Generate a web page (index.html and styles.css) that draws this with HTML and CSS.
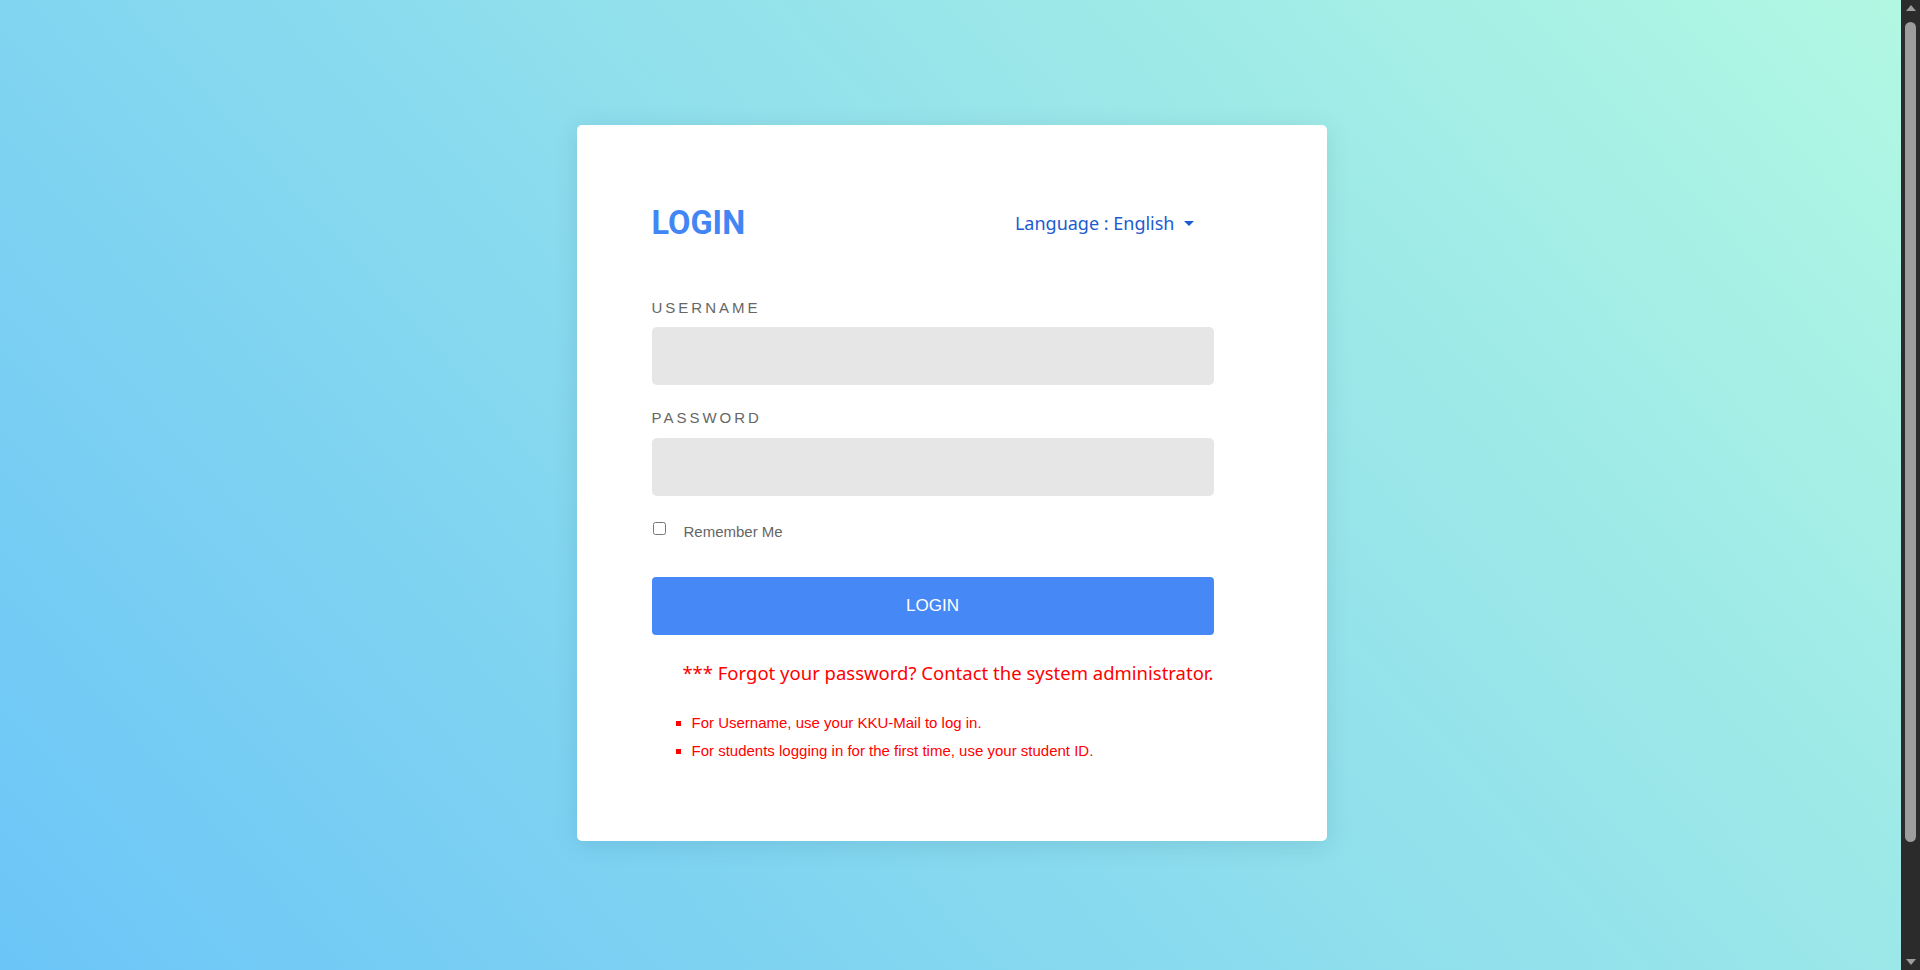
FILE: index.html
```html
<!DOCTYPE html>
<html lang="en">
<head>
<meta charset="utf-8">
<title>Login</title>
<link rel="stylesheet" href="styles.css">
</head>
<body>
<div class="page">
  <div class="card">
    <div class="card-head">
      <h1 class="title">LOGIN</h1>
      <div class="lang">Language : English<span class="caret"></span></div>
    </div>
    <form class="form">
      <label class="field-label" for="u">USERNAME</label>
      <input class="field" id="u" type="text">
      <label class="field-label second" for="p">PASSWORD</label>
      <input class="field" id="p" type="password">
      <div class="remember">
        <input class="check" type="checkbox" id="r">
        <label class="remember-text" for="r">Remember Me</label>
      </div>
      <button class="btn" type="button">LOGIN</button>
      <p class="forgot">*** Forgot your password? Contact the system administrator.</p>
      <ul class="notes">
        <li>For Username, use your KKU-Mail to log in.</li>
        <li>For students logging in for the first time, use your student ID.</li>
      </ul>
    </form>
  </div>
</div>
<div class="scrollbar" aria-hidden="true">
  <span class="sb-arrow sb-up"></span>
  <span class="sb-thumb"></span>
  <span class="sb-arrow sb-down"></span>
</div>
</body>
</html>
```
FILE: styles.css
```css
html {
  height: 100%;
}
body {
  margin: 0;
  min-height: 100%;
  font-family: "Liberation Sans", Arial, sans-serif;
  background: linear-gradient(48deg, #6bc5f7 0%, #b2f8e2 100%);
  overflow: hidden;
}
.page {
  display: flex;
  justify-content: center;
  padding: 125px 17px 0 0;
}
.card {
  width: 562px;
  padding: 75px 113px 76px 75px;
  background: #fff;
  border-radius: 5px;
  box-shadow: 0 4px 24px rgba(0, 60, 90, 0.12);
}
.card-head {
  display: flex;
  justify-content: space-between;
  align-items: center;
  height: 46px;
}
.title {
  margin: 0;
  font-family: Roboto, "Liberation Sans", sans-serif;
  font-weight: 700;
  font-size: 32.5px;
  line-height: 46px;
  color: #4285f4;
}
.lang {
  margin-right: 20px;
  font-family: "Noto Sans", sans-serif;
  font-size: 18px;
  color: #1c5cd0;
  display: flex;
  align-items: center;
}
.caret {
  display: inline-block;
  width: 0;
  height: 0;
  margin-left: 9px;
  margin-top: 1px;
  border-top: 5px solid #1c5cd0;
  border-left: 5px solid transparent;
  border-right: 5px solid transparent;
}
.form {
  display: flex;
  flex-direction: column;
  margin-top: 52.5px;
}
.field-label {
  font-size: 15px;
  line-height: 17px;
  letter-spacing: 3px;
  color: #666;
  margin-bottom: 11.5px;
}
.field-label.second {
  margin-top: 24px;
}
.field {
  box-sizing: border-box;
  height: 58px;
  width: 562px;
  border: none;
  border-radius: 5px;
  background: #e6e6e6;
  padding: 0 15px;
  font-size: 16px;
  outline: none;
}
.remember {
  display: flex;
  align-items: flex-start;
  margin-top: 26px;
}
.check {
  width: 13px;
  height: 13px;
  margin: 0 0 0 1px;
}
.remember-text {
  margin-left: 18px;
  margin-top: 1px;
  font-size: 15px;
  line-height: 17px;
  color: #666;
}
.btn {
  margin-top: 37px;
  height: 58px;
  width: 562px;
  border: none;
  border-radius: 4px;
  background: #4688f5;
  color: #fff;
  font-family: "Liberation Sans", Arial, sans-serif;
  font-size: 17px;
}
.forgot {
  margin: 25px 0 0;
  text-align: right;
  font-family: "Noto Sans", sans-serif;
  font-size: 18.5px;
  color: #ff0000;
}
.notes {
  margin: 24px 0 0;
  padding-left: 40px;
  list-style: square;
  color: #ff0000;
  font-size: 15px;
  line-height: 28px;
}
.scrollbar {
  position: fixed;
  top: 0;
  right: 0;
  width: 19px;
  height: 100vh;
  background: #2b2b2b;
  display: flex;
  flex-direction: column;
  align-items: center;
}
.sb-arrow {
  width: 0;
  height: 0;
  border-left: 5px solid transparent;
  border-right: 5px solid transparent;
}
.sb-up {
  margin-top: 5px;
  border-bottom: 6px solid #9d9d9d;
}
.sb-down {
  margin-top: auto;
  margin-bottom: 5px;
  border-top: 6px solid #9d9d9d;
}
.sb-thumb {
  margin-top: 11px;
  width: 11px;
  height: 820px;
  border-radius: 6px;
  background: #9d9d9d;
}
```
